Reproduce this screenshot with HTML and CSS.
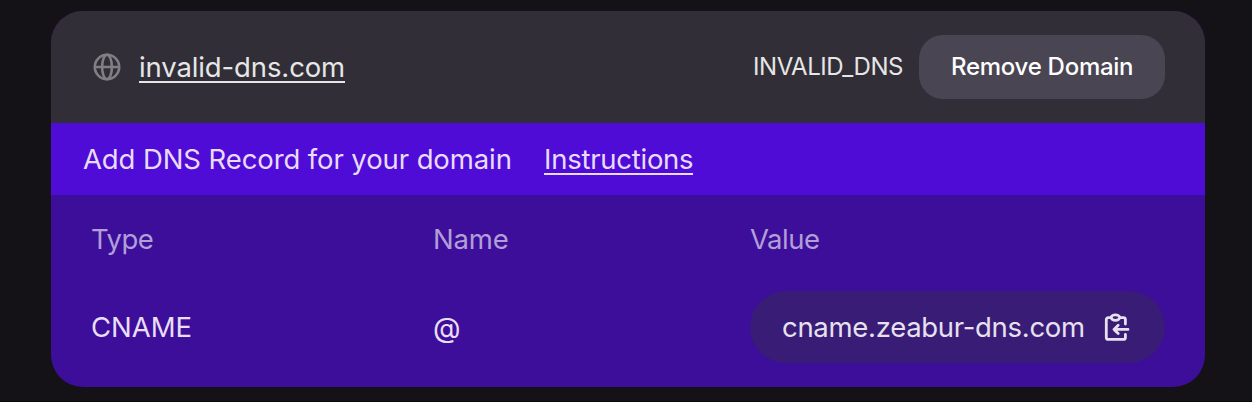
FILE: index.html
```html
<!DOCTYPE html>
<html lang="en">
<head>
<meta charset="utf-8">
<title>Domains</title>
<link rel="stylesheet" href="styles.css">
</head>
<body>
<section class="card">
  <header class="head">
    <svg class="globe" viewBox="0 0 28 28" fill="none" stroke="currentColor" stroke-width="2.6"><circle cx="14" cy="14" r="12.2"/><ellipse cx="14" cy="14" rx="4.9" ry="12.2"/><path d="M1.8 14h24.4"/></svg>
    <a class="domain link">invalid-dns.com</a>
    <span class="status">INVALID_DNS</span>
    <button class="remove"><span class="remove-label">Remove Domain</span></button>
  </header>
  <div class="notice">
    <span class="notice-text">Add DNS Record for your domain</span>
    <a class="instructions link">Instructions</a>
  </div>
  <div class="records">
    <div class="row labels">
      <span class="type">Type</span><span class="name">Name</span><span class="value">Value</span>
    </div>
    <div class="row values">
      <span class="cname">CNAME</span><span class="at">@</span>
      <div class="pill">
        <span class="target">cname.zeabur-dns.com</span>
        <svg class="clip" viewBox="0 0 26 28" fill="none" stroke="currentColor" stroke-width="2.8" stroke-linecap="round" stroke-linejoin="round"><ellipse cx="11.4" cy="4.6" rx="4.2" ry="2.7"/><path d="M7 4.6H4.3a2 2 0 0 0-2 2v17.8a2 2 0 0 0 2 2h15.1a2 2 0 0 0 2-2v-2.9M15.8 4.6h3.6a2 2 0 0 1 2 2v4.4M24 16.4H10M14.2 12.2L10 16.4l4.2 4.2"/></svg>
      </div>
    </div>
  </div>
</section>
</body>
</html>
```
FILE: styles.css
```css
* { box-sizing: border-box; }
body {
  margin: 0;
  height: 402px;
  padding: 11px 47px 0 51px;
  overflow: hidden;
  background: #141216;
  border-bottom: 1px solid #090709;
  color: #e6e6e6;
  font: 400 27.5px/40px Inter, "Liberation Sans", sans-serif;
  white-space: nowrap;
}
.card { height: 376px; border-radius: 32px; overflow: hidden; background: #3d0e9a; }
.head { display: flex; align-items: center; height: 112px; padding: 0 40px 0 42px; background: #312e37; }
.globe { width: 28px; height: 28px; color: #817f84; }
.link { height: 32px; line-height: 32px; border-bottom: 2px solid currentColor; }
.domain { width: 206px; margin-left: 18px; letter-spacing: -0.12px; }
.status { margin-left: auto; width: 150px; font-size: 24px; letter-spacing: -0.45px; }
.remove {
  width: 246px; height: 64px; margin-left: 16px; padding: 0 0 0 32px;
  border: 0; border-radius: 24px; background: #4a4553; color: #fff;
  font: 500 24px/40px Inter, "Liberation Sans", sans-serif; letter-spacing: -0.27px; text-align: left;
}
.notice { display: flex; align-items: center; height: 72px; padding-left: 32px; background: #500cd7; color: #e9dcfb; }
.notice-text { width: 429px; letter-spacing: -0.1px; }
.instructions { width: 149px; margin-left: 32px; letter-spacing: -0.25px; }
.records { padding: 0 40px; color: #e8def5; }
.row { display: grid; grid-template-columns: 342px 317px 415px; align-items: center; }
.labels { height: 88px; color: #b19fd7; }
.type, .value { letter-spacing: -0.5px; }
.name { letter-spacing: -0.2px; }
.values { height: 88px; }
.at { font-size: 28.5px; padding-top: 2px; }
.pill { display: flex; align-items: center; height: 72px; padding-left: 32px; border-radius: 36px; background: #391c76; color: #e7e1ef; }
.target { width: 302px; letter-spacing: -0.3px; }
.clip { width: 26px; height: 28px; margin-left: 20px; }
```
